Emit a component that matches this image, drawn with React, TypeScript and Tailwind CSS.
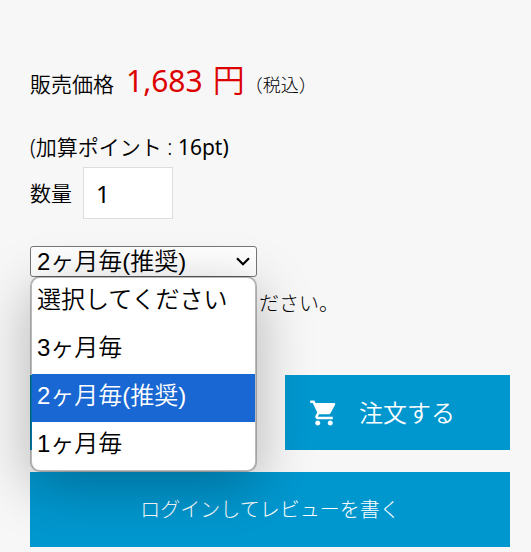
import { useState } from "react";
import { MdShoppingCart } from "react-icons/md";

const cycles = ["選択してください", "3ヶ月毎", "2ヶ月毎(推奨)", "1ヶ月毎"];

export default function App() {
  const [cycle, setCycle] = useState(cycles[2]);
  const [quantity, setQuantity] = useState("1");

  return (
    <main className="min-h-screen bg-[#f7f7f7] pt-[60px] pr-[21px] pb-[5px] pl-[30px] font-['Noto_Sans','Noto_Sans_CJK_JP',sans-serif] text-[21px] leading-[32px] font-[350] text-black">
      {/* Price */}
      <p className="flex h-[40px] items-baseline leading-[40px] whitespace-nowrap">
        <span>販売価格</span>
        <span className="ml-3 text-[30px] font-normal text-[#dc0000]">1,683</span>
        <span className="ml-[10px] text-[32px] text-[#dc0000]">円</span>
        <span className="text-[18px] font-light">（税込）</span>
      </p>

      <p className="mt-[31px] whitespace-nowrap">
        (加算ポイント : <span className="font-normal">16pt)</span>
      </p>

      {/* Quantity */}
      <div className="mt-1 flex items-center">
        <label htmlFor="quantity">数量</label>
        <input
          id="quantity"
          type="text"
          value={quantity}
          onChange={(e) => setQuantity(e.target.value)}
          className="ml-[11px] h-[52px] w-[90px] border border-[#ddd] bg-white px-3 text-[24px] font-normal"
        />
      </div>

      {/* Delivery cycle */}
      <div className="mt-[27px] grid grid-cols-2 gap-[26px]">
        <div className="relative">
          <select
            aria-label="お届け周期"
            value={cycle}
            onChange={(e) => setCycle(e.target.value)}
            className="block h-[31px] w-full appearance-none rounded-[3px] border border-[#767676] bg-white px-[6px] font-['Liberation_Sans','Noto_Sans_CJK_JP',sans-serif] text-[24px] leading-[29px]"
          >
            {cycles.map((item) => (
              <option key={item}>{item}</option>
            ))}
          </select>
          <svg
            viewBox="0 0 14 9"
            className="pointer-events-none absolute top-[11px] right-[7px] h-[9px] w-[14px]"
            fill="none"
            stroke="black"
            strokeWidth="2.2"
          >
            <path d="M1 1.2 7 7.2 13 1.2" />
          </svg>

          <ul
            role="listbox"
            aria-label="お届け周期"
            className="absolute top-[30px] left-0 z-10 w-full overflow-hidden rounded-[10px] border-2 border-black/25 bg-white bg-clip-padding font-['Liberation_Sans','Noto_Sans_CJK_JP',sans-serif] text-[24px] shadow-[0_14px_56px_rgba(0,0,0,0.28)]"
          >
            {cycles.map((item) => (
              <li
                key={item}
                role="option"
                aria-selected={item === cycle}
                onClick={() => setCycle(item)}
                className="h-12 px-[5px] leading-[44px] whitespace-nowrap aria-selected:bg-[#1967d2] aria-selected:text-white"
              >
                {item}
              </li>
            ))}
          </ul>
        </div>
      </div>

      <p className="mt-[11px] grid grid-cols-2 gap-[26px] text-[20px] font-light whitespace-nowrap">
        <span className="col-start-2 -ml-6">ださい。</span>
      </p>

      {/* Actions */}
      <div className="mt-[55px] grid grid-cols-2 gap-[30px] text-white">
        <button type="button" aria-label="カートに入れる" className="h-[75px] bg-[#0097cf]" />
        <button type="button" className="flex h-[75px] items-center bg-[#0097cf] pl-6 text-[24px]">
          <MdShoppingCart className="size-[30px]" />
          <span className="ml-5">注文する</span>
        </button>
      </div>
      <button
        type="button"
        className="mt-[22px] h-[75px] w-full bg-[#0097cf] text-[20px] font-light text-white"
      >
        ログインしてレビューを書く
      </button>
    </main>
  );
}
